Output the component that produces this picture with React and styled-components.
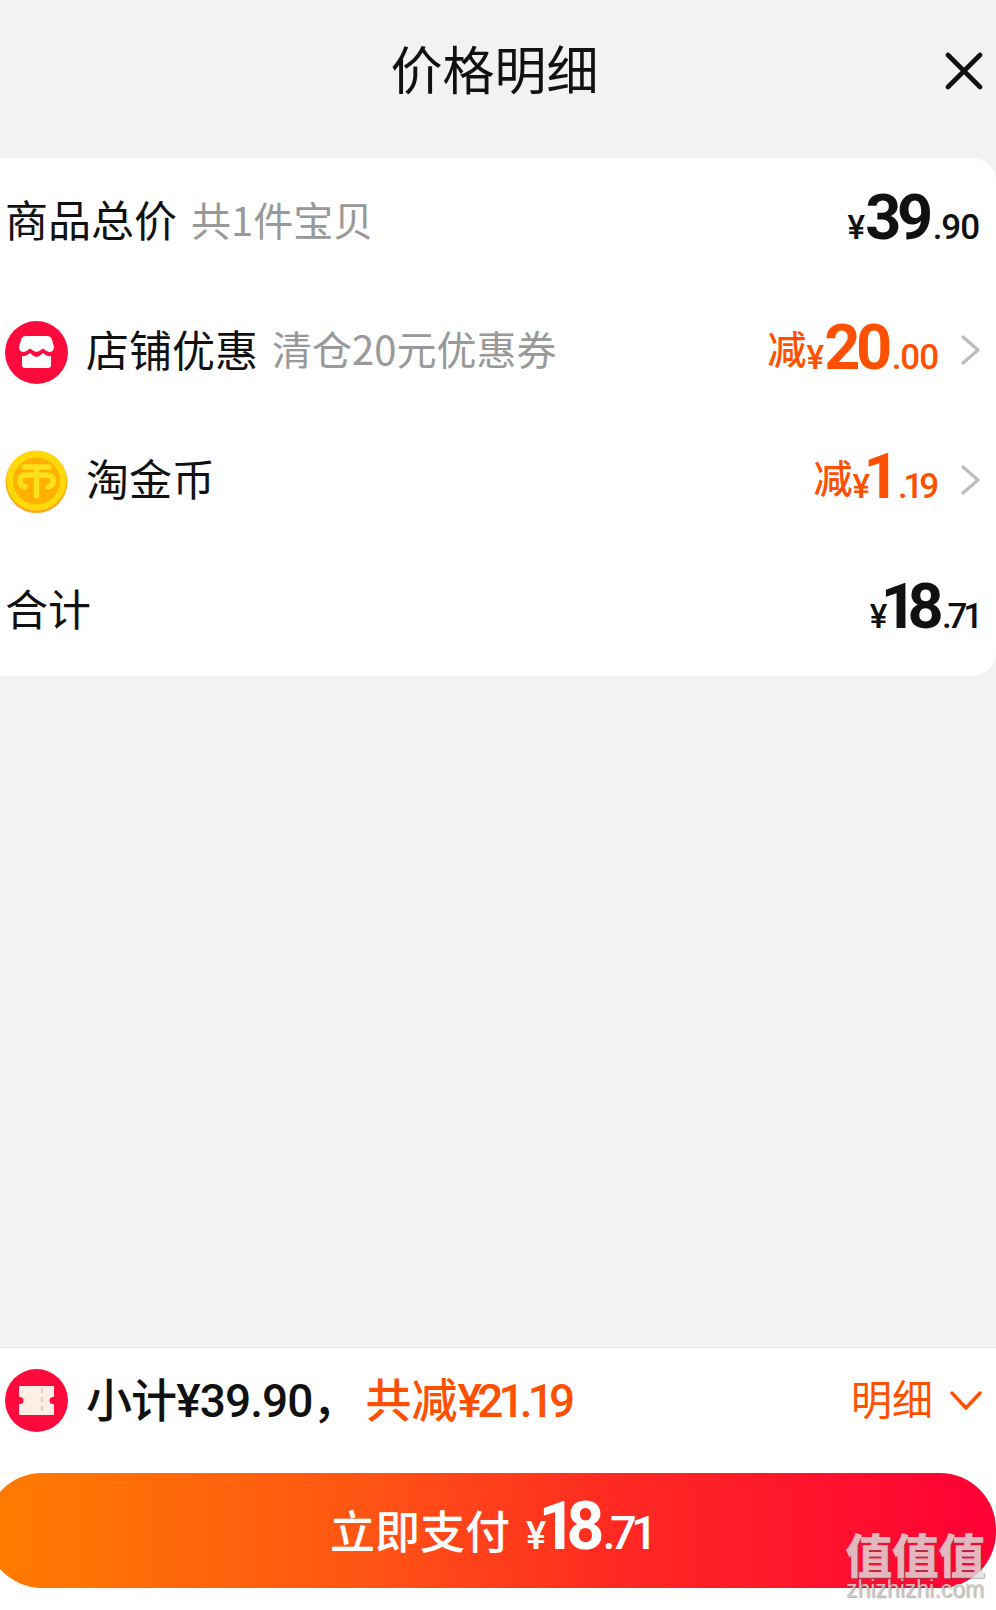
import React from "react";
import styled, { createGlobalStyle } from "styled-components";

const CJK = `"Noto Sans CJK SC", "Noto Sans", sans-serif`;
const NUM = `Roboto, "Noto Sans CJK SC", sans-serif`;
const ORANGE = "#ff5000";
const INK = "#111111";

const Global = createGlobalStyle`
  html, body { margin: 0; padding: 0; background: #f2f2f2; }
  * { box-sizing: border-box; }
`;

const Page = styled.div`
  width: 996px;
  height: 1610px;
  display: flex;
  flex-direction: column;
  background: #f2f2f2;
  font-family: ${CJK};
  color: ${INK};
  overflow: hidden;
`;

const Header = styled.header`
  height: 158px;
  padding: 0 7px 16px 0;
  display: grid;
  grid-template-columns: 1fr auto 1fr;
  align-items: center;
`;

const Title = styled.h1`
  grid-column: 2;
  margin: 0;
  padding-bottom: 6px;
  font-size: 52px;
  font-weight: 400;
  line-height: 1;
`;

const Close = styled.svg`
  justify-self: end;
  width: 38px;
  height: 38px;
  margin-right: 6px;
`;

const Card = styled.section`
  height: 518px;
  background: #fff;
  border-radius: 0 24px 24px 0;
  display: grid;
  grid-auto-rows: 1fr;
`;

const Row = styled.div`
  display: flex;
  align-items: center;
  padding: 0 16px 0 5px;
`;

const Icon = styled.svg`
  width: 63px;
  height: 63px;
  flex: none;
  margin-right: 18px;
`;

const Label = styled.span`
  font-size: 43px;
  line-height: 1;
  font-weight: 400;
  padding-bottom: 8px;
`;

const Sub = styled.span`
  font-size: 40px;
  line-height: 1;
  color: #999;
  margin-left: 14px;
  padding-bottom: 8px;
`;

const Amount = styled.div`
  margin-left: auto;
  margin-right: ${(p) => (p.$arrow ? (p.$tight ? "3px" : "0") : "1px")};
  margin-bottom: 10px;
  display: flex;
  align-items: baseline;
  font-family: ${NUM};
  color: ${(p) => (p.$tone === "orange" ? ORANGE : INK)};
  font-weight: 500;
  line-height: 1;
`;

const Cut = styled.span`
  font-family: ${CJK};
  font-size: 39px;
  font-weight: 500;
  transform: translateY(-5px);
`;

const Yen = styled.span`
  font-size: ${(p) => p.$size || 33}px;
  font-weight: 500;
  letter-spacing: ${(p) => (p.$tight ? "-0.2em" : "-0.06em")};
  margin-right: ${(p) => (p.$tight ? "0" : "2px")};
`;

const Big = styled.span`
  font-size: ${(p) => p.$size || 63}px;
  font-weight: 700;
  letter-spacing: ${(p) => (p.$tight ? "-0.15em" : "-0.07em")};
  margin-right: ${(p) => (p.$tight ? "8px" : "4px")};
`;

const Small = styled.span`
  font-size: ${(p) => p.$size || 35}px;
  font-weight: 500;
  letter-spacing: ${(p) => (p.$tight ? "-0.12em" : "-0.03em")};
`;

const Chevron = styled.svg`
  width: 20px;
  height: 32px;
  margin-left: 22px;
  margin-bottom: 4px;
  flex: none;
`;

const Spacer = styled.div`
  flex: 1;
`;

const Footer = styled.footer`
  position: relative;
  background: #fff;
  border-top: 1px solid #e6e6e6;
  height: 263px;
`;

const Summary = styled.div`
  height: 125px;
  padding: 0 14px 20px 5px;
  display: flex;
  align-items: center;
`;

const SumText = styled.span`
  font-family: ${NUM};
  font-size: 46px;
  font-weight: 500;
  line-height: 1;
  color: ${INK};
  letter-spacing: -0.02em;
`;

const SumCut = styled(SumText)`
  color: ${ORANGE};
  letter-spacing: 0;
  margin-left: 8px;
`;

const SumDigits = styled.span`
  letter-spacing: -0.105em;
`;

const DetailLink = styled.span`
  margin-left: auto;
  display: flex;
  align-items: center;
  gap: 17px;
  color: ${ORANGE};
  font-size: 41px;
  line-height: 1;
`;

const DetailText = styled.span`
  padding-bottom: 6px;
`;

const DownIcon = styled.svg`
  width: 32px;
  height: 22px;
`;

const PayButton = styled.button`
  display: flex;
  width: 1010px;
  height: 115px;
  margin-left: -14px;
  border: 0;
  padding: 0;
  border-radius: 56px;
  align-items: baseline;
  justify-content: center;
  line-height: 108px;
  color: #fff;
  font-family: ${NUM};
  font-weight: 500;
  background: linear-gradient(90deg, #ff7d00 0%, #ff5414 38%, #ff2a22 62%, #ff0036 100%);
`;

const PayLabel = styled.span`
  font-family: ${CJK};
  font-size: 45px;
  margin-right: 16px;
`;

const Watermark = styled.div`
  position: absolute;
  right: 8px;
  bottom: 8px;
  width: 146px;
  display: flex;
  flex-direction: column;
  align-items: center;
  color: rgba(255, 255, 255, 0.66);
  text-shadow: 1px 1px 1px rgba(90, 90, 90, 0.5);
  pointer-events: none;
`;

const WmMain = styled.span`
  font-size: 47px;
  font-weight: 900;
  line-height: 48px;
  letter-spacing: -0.5px;
  white-space: nowrap;
`;

const WmSub = styled.span`
  font-family: "Liberation Sans", sans-serif;
  font-size: 23px;
  line-height: 25px;
  white-space: nowrap;
  color: rgba(205, 205, 205, 0.9);
`;

const ChevronRight = () => (
  <Chevron viewBox="0 0 20 32">
    <path d="M3 3 L18 16 L3 29" fill="none" stroke="#bdbdbd" strokeWidth="3.2" strokeLinecap="round" strokeLinejoin="round" />
  </Chevron>
);

const Price = ({ tone, arrow, cut, int, dec, tight }) => (
  <Amount $tone={tone} $arrow={arrow} $tight={tight}>
    {cut && <Cut>减</Cut>}
    <Yen $tight={tight}>¥</Yen>
    <Big $tight={tight}>{int}</Big>
    <Small $tight={tight}>.{dec}</Small>
  </Amount>
);

const StoreIcon = () => (
  <Icon viewBox="0 0 63 63">
    <circle cx="31.5" cy="31.5" r="31.5" fill="#ff0a3c" />
    <path d="M21 15 H42 Q46 15 47 19 L49 26 Q49 31 44 31 Q41 30 38 27.5 Q35 30 31.5 31 Q28 30 25 27.5 Q22 30 19 31 Q14 31 14 26 L16 19 Q17 15 21 15 Z" fill="#fff" />
    <path d="M17 35 Q20 36 25 32 Q28 35 31.5 36 Q35 35 38 32 Q43 36 46 35 V44 Q46 47 43 47 H20 Q17 47 17 44 Z" fill="#fff" />
  </Icon>
);

const CoinIcon = () => (
  <Icon viewBox="0 0 63 63">
    <circle cx="31.5" cy="32" r="31" fill="#fda81c" />
    <circle cx="31.5" cy="30.5" r="30" fill="#ffd908" />
    <circle cx="31.5" cy="31" r="23.5" fill="#ffb000" />
    <g fill="none" stroke="#ffe01a" strokeWidth="5.5" strokeLinecap="round">
      <path d="M19 17 H44" />
      <path d="M31.5 17 V46" />
      <path d="M20 37 Q15 36 15 31 Q15 25 21 25 H42 Q48 25 48 31 Q48 36 43 37" />
    </g>
  </Icon>
);

const TicketIcon = () => (
  <Icon viewBox="0 0 63 63">
    <circle cx="31.5" cy="31.5" r="31.5" fill="#ff0a3c" />
    <path d="M15 18 H48 V27 A4.5 4.5 0 0 0 48 36 V45 H15 V36 A4.5 4.5 0 0 0 15 27 Z" fill="#fdeee6" stroke="#fdeee6" strokeWidth="2" strokeLinejoin="round" />
    <path d="M37 19 V45" stroke="#e9cfc8" strokeWidth="2.5" strokeDasharray="5 4" />
  </Icon>
);

export default function App() {
  return (
    <Page>
      <Global />
      <Header>
        <Title>价格明细</Title>
        <Close viewBox="0 0 38 38">
          <path d="M3 3 L35 35 M35 3 L3 35" stroke="#111" strokeWidth="4.6" strokeLinecap="round" />
        </Close>
      </Header>
      <Card>
        <Row>
          <Label>商品总价</Label>
          <Sub>共1件宝贝</Sub>
          <Price int="39" dec="90" />
        </Row>
        <Row>
          <StoreIcon />
          <Label>店铺优惠</Label>
          <Sub>清仓20元优惠券</Sub>
          <Price tone="orange" arrow cut int="20" dec="00" />
          <ChevronRight />
        </Row>
        <Row>
          <CoinIcon />
          <Label>淘金币</Label>
          <Price tone="orange" arrow cut tight int="1" dec="19" />
          <ChevronRight />
        </Row>
        <Row>
          <Label>合计</Label>
          <Price tight int="18" dec="71" />
        </Row>
      </Card>
      <Spacer />
      <Footer>
        <Summary>
          <TicketIcon />
          <SumText>小计¥39.90，</SumText>
          <SumCut>共减<SumDigits>¥21.19</SumDigits></SumCut>
          <DetailLink>
            <DetailText>明细</DetailText>
            <DownIcon viewBox="0 0 32 22">
              <path d="M2 3 L16 18 L30 3" fill="none" stroke={ORANGE} strokeWidth="3.4" strokeLinecap="round" strokeLinejoin="round" />
            </DownIcon>
          </DetailLink>
        </Summary>
        <PayButton>
          <PayLabel>立即支付</PayLabel>
          <Yen $tight $size={38}>¥</Yen>
          <Big $tight $size={66}>18</Big>
          <Small $tight $size={47}>.71</Small>
        </PayButton>
        <Watermark>
          <WmMain>值值值</WmMain>
          <WmSub>zhizhizhi.com</WmSub>
        </Watermark>
      </Footer>
    </Page>
  );
}
